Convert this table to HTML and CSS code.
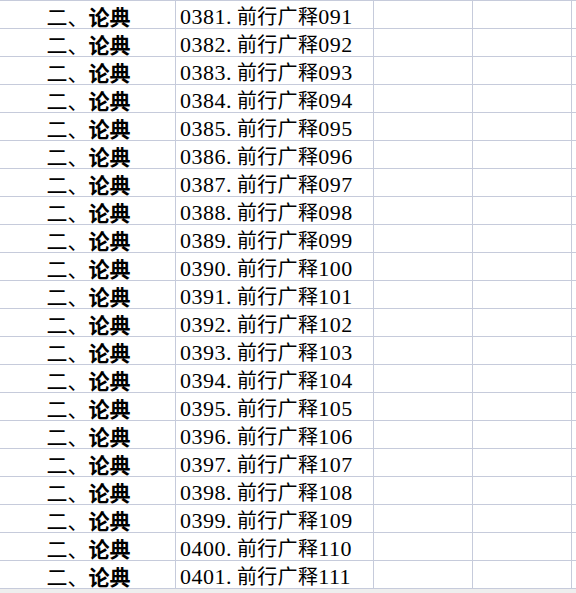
FILE: index.html
```html
<!DOCTYPE html>
<html lang="zh-CN">
<head>
    <meta charset="UTF-8">
    <title>论典目录</title>
    <link rel="stylesheet" href="styles.css">
</head>
<body>

    <div class="sheet" id="sheet"></div>

    <script>
        // 行数据：序号从 0381 开始，广释编号从 091 开始
        const sheet = document.getElementById('sheet');

        for (let i = 0; i < 21; i++) {
            const no = String(381 + i).padStart(4, '0');
            const part = String(91 + i).padStart(3, '0');

            const row = document.createElement('div');
            row.className = 'row';
            row.innerHTML =
                '<div class="cell cat"><span>二、</span><b>论典</b></div>' +
                '<div class="cell title"><span class="num idx">' + no + '.</span>前行广释<span class="num">' + part + '</span></div>' +
                '<div class="cell"></div>' +
                '<div class="cell"></div>' +
                '<div class="cell last"></div>';
            sheet.appendChild(row);
        }
    </script>

</body>
</html>
```

FILE: styles.css
```css
body {
    margin: 0;
    background-color: #eeeeee;
    font-family: "Noto Sans CJK SC", sans-serif;
    color: #000;
}
.sheet {
    background-color: #ffffff;
    border-top: 1px solid #c6cbdb;
    width: 576px;
}
.row {
    display: flex;
    height: 28px;
}
.cell {
    box-sizing: border-box;
    height: 28px;
    padding-top: 3px;
    border-right: 1px solid #c6cbdb;
    border-bottom: 1px solid #c6cbdb;
    flex: 0 0 99px;
    white-space: nowrap;
    line-height: 24px;
}
.cell.last {
    flex: 1 0 4px;
    border-right: none;
}
.cat {
    flex-basis: 176px;
    text-align: center;
    font-size: 21px;
    padding-left: 2px;
}
.cat b {
    font-weight: 700;
}
.title {
    flex-basis: 198px;
    padding-left: 4px;
    font-size: 20px;
    letter-spacing: 0.3px;
}
.num {
    font-family: "Liberation Serif", serif;
    font-size: 22px;
    letter-spacing: 0.5px;
}
.idx {
    padding-right: 5px;
}
```
